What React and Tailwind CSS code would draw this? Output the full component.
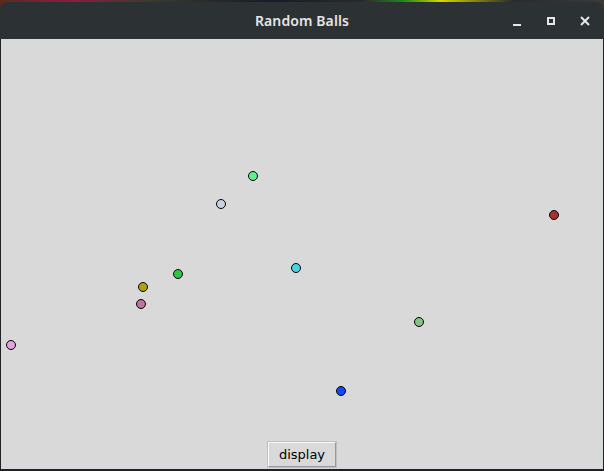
import React from 'react';

const balls = [
  { x: 253, y: 176, c: 'bg-[#5df28c]' },
  { x: 221, y: 204, c: 'bg-[#c9d2e3]' },
  { x: 554, y: 215, c: 'bg-[#a5302f]' },
  { x: 178, y: 274, c: 'bg-[#2fc448]' },
  { x: 296, y: 268, c: 'bg-[#45d6e2]' },
  { x: 143, y: 287, c: 'bg-[#b2a208]' },
  { x: 141, y: 304, c: 'bg-[#c2739e]' },
  { x: 11, y: 345, c: 'bg-[#e0a4dc]' },
  { x: 419, y: 322, c: 'bg-[#84c287]' },
  { x: 341, y: 391, c: 'bg-[#1547ff]' },
];

const App = () => {
  return (
    <div className="w-[604px] h-[471px] bg-[linear-gradient(90deg,#5a2a20_0%,#8a1f3a_12%,#3a3a2a_25%,#1a1a2a_45%,#2a2a2a_60%,#1f8a1f_67%,#d8d800_73%,#2a2a2a_85%,#3a3a3a_100%)] flex flex-col overflow-hidden">
      <div className="mt-[2px] h-[37px] shrink-0 bg-[#2c3133] rounded-t-[8px] relative flex items-center justify-center">
        <span className="text-[14px] font-semibold text-[#e6e6e6] font-['Noto_Sans',sans-serif] tracking-[0.1px]">Random Balls</span>
        <div className="absolute right-0 top-0 h-full flex items-center">
          <div className="w-[34px] flex justify-center pt-[8px]">
            <div className="w-[8px] h-[2px] bg-[#e6e6e6]" />
          </div>
          <div className="w-[34px] flex justify-center">
            <div className="w-[8px] h-[8px] border-2 border-[#e6e6e6]" />
          </div>
          <div className="w-[34px] flex justify-center mr-[2px]">
            <svg width="10" height="10" viewBox="0 0 10 10">
              <path d="M1 1 L9 9 M9 1 L1 9" stroke="#e6e6e6" strokeWidth="2" />
            </svg>
          </div>
        </div>
      </div>
      <div className="flex-1 bg-[#1f2222] px-[1px] pb-[2px] flex">
        <div className="flex-1 bg-[#d9d9d9] relative flex flex-col justify-end items-center pb-[1px]">
          {balls.map((b, i) => (
            <div
              key={i}
              className={`absolute w-[10px] h-[10px] rounded-full border border-black ${b.c}`}
              style={{ left: b.x - 1 - 5, top: b.y - 39 - 5 }}
            />
          ))}
          <button className="w-[68px] h-[25px] bg-[#d9d9d9] border border-t-[#f8f8f8] border-l-[#f8f8f8] border-r-[#9a9a9a] border-b-[#9a9a9a] outline outline-1 outline-[#c0c0c0] text-[13px] text-black font-['DejaVu_Sans',sans-serif] mb-[1px]">
            display
          </button>
        </div>
      </div>
    </div>
  );
};

export default App;
